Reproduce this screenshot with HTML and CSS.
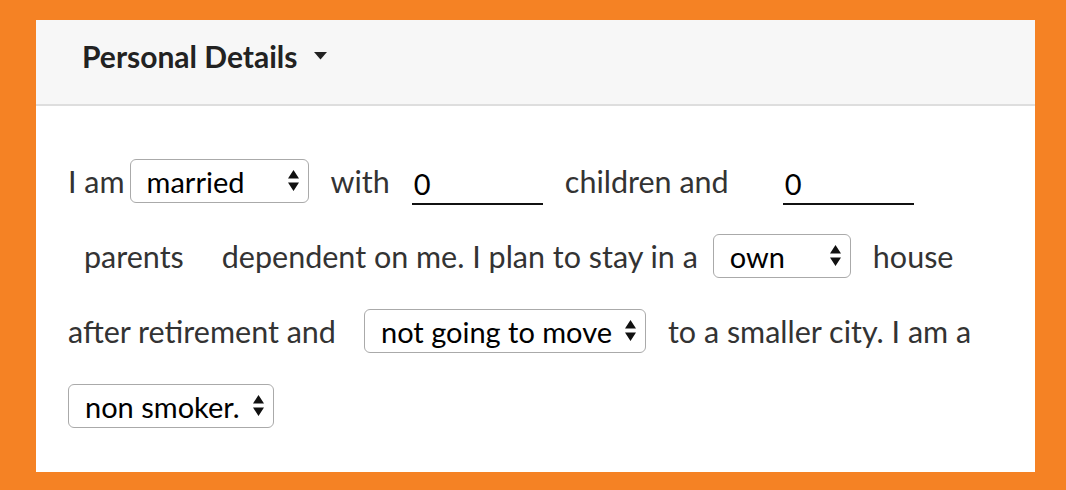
FILE: index.html
```html
<!DOCTYPE html>
<html lang="en">
<head>
    <meta charset="UTF-8">
    <meta name="viewport" content="width=device-width, initial-scale=1.0">
    <title>Personal Details</title>
    <link rel="stylesheet" href="styles.css">
</head>
<body>
    <div class="card">
        <div class="card-header">
            <span class="card-title">Personal Details</span>
            <svg class="caret" width="13" height="8" viewBox="0 0 13 8"><path d="M0 0 H13 L6.5 7.5 Z" fill="#222"/></svg>
        </div>

        <div class="card-body">
            <div class="row">
                <span>I am</span>
                <span class="picker tight w-married">
                    <select><option>married</option><option>single</option></select>
                    <svg class="arrows" viewBox="0 0 11 21"><path d="M5.5 0 L11 8.5 H0 Z M0 12.5 H11 L5.5 21 Z" fill="#111"/></svg>
                </span>
                <span>with</span>
                <input class="count" type="text" value="0">
                <span>children and</span>
                <input class="count wide-left" type="text" value="0">
            </div>

            <div class="row">
                <span class="indent">parents</span>
                <span class="spaced">dependent on me. I plan to stay in a</span>
                <span class="picker w-own pull">
                    <select><option>own</option><option>rented</option></select>
                    <svg class="arrows" viewBox="0 0 11 21"><path d="M5.5 0 L11 8.5 H0 Z M0 12.5 H11 L5.5 21 Z" fill="#111"/></svg>
                </span>
                <span class="house">house</span>
            </div>

            <div class="row">
                <span>after retirement and</span>
                <span class="picker w-move push">
                    <select><option>not going to move</option><option>going to move</option></select>
                    <svg class="arrows" viewBox="0 0 11 21"><path d="M5.5 0 L11 8.5 H0 Z M0 12.5 H11 L5.5 21 Z" fill="#111"/></svg>
                </span>
                <span>to a smaller city. I am a</span>
            </div>

            <div class="row">
                <span class="picker w-smoker">
                    <select><option>non smoker.</option><option>smoker.</option></select>
                    <svg class="arrows" viewBox="0 0 11 21"><path d="M5.5 0 L11 8.5 H0 Z M0 12.5 H11 L5.5 21 Z" fill="#111"/></svg>
                </span>
            </div>
        </div>
    </div>
</body>
</html>
```

FILE: styles.css
```css
body {
    margin: 0;
    padding: 20px 31px 18px 36px;
    background-color: #f58224;
    font-family: Lato, "Open Sans", sans-serif;
}
.card {
    background: #ffffff;
}
.card-header {
    display: flex;
    align-items: center;
    height: 72px;
    padding: 0 0 12px 46px;
    background: #f7f7f7;
    border-bottom: 2px solid #dedede;
}
.card-title {
    font-size: 30px;
    font-weight: 700;
    color: #222;
}
.caret {
    margin-left: 17px;
}
.card-body {
    display: flex;
    flex-direction: column;
    gap: 31px;
    padding: 53px 32px 44px;
    font-size: 30.5px;
    color: #333;
}
.row {
    display: flex;
    align-items: center;
    gap: 22px;
    height: 44px;
    white-space: nowrap;
}
.picker {
    position: relative;
    display: inline-block;
    height: 44px;
}
.picker select {
    appearance: none;
    -webkit-appearance: none;
    width: 100%;
    height: 44px;
    padding: 0 0 0 16px;
    border: 1px solid #aaa;
    border-radius: 6px;
    background: #fff;
    font-family: inherit;
    font-size: 29px;
    color: #000;
}
.arrows {
    position: absolute;
    right: 10px;
    top: 11px;
    width: 11px;
    height: 21px;
    pointer-events: none;
}
.w-married { width: 179px; }
.w-own { width: 138px; }
.w-move { width: 282px; }
.w-smoker { width: 206px; }
.tight { margin-left: -17px; }
.pull { margin-left: -7px; }
.push { margin-left: 6px; }
.count {
    width: 129px;
    height: 40px;
    padding: 0 0 0 2px;
    margin-top: 6px;
    border: none;
    border-bottom: 2px solid #111;
    font-family: inherit;
    font-size: 29px;
    color: #000;
    outline: none;
}
.wide-left { margin-left: 32px; }
.indent { margin-left: 16px; }
.spaced { margin-left: 16px; }
```
